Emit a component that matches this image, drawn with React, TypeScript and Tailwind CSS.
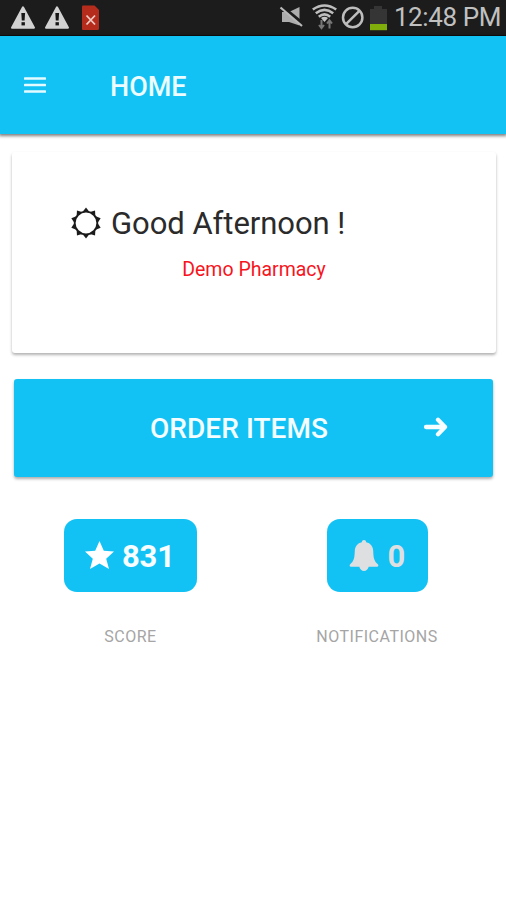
import React from "react";

const sunRays = Array.from({ length: 10 }, (_, i) => i * 36);

function StatusBar() {
  return (
    <div className="flex h-9 items-start bg-[#1c1c1c] border-b border-[#111]">
      <svg width="110" height="35" viewBox="0 0 110 35" className="shrink-0">
        {[0, 34].map((x) => (
          <g key={x} transform={`translate(${x} 0)`}>
            <path d="M23 7.300 34 27.700H12Z" fill="#d2d2d2" stroke="#d2d2d2" strokeWidth="2" strokeLinejoin="round" />
            <path d="M21.300 13h3.800l-.500 7.600h-2.800z" fill="#161616" />
            <rect x="21.500" y="22.200" width="3.400" height="3.200" fill="#161616" />
          </g>
        ))}
        <path d="M83 5.500h11.500l4.500 4.500v18.500a1.500 1.500 0 0 1-1.500 1.500h-14.500a1 1 0 0 1-1-1V6.500a1 1 0 0 1 1-1z" fill="#b52c1c" />
        <path d="m86.500 15.500 8.500 9m0-9-8.500 9" stroke="#eecbc5" strokeWidth="1.800" />
      </svg>
      <div className="flex-1" />
      <svg width="120" height="35" viewBox="270 0 120 35" className="mr-[4px] shrink-0">
        <path d="M282 12h7l10.500-5v18.500l-10.500-3.500h-7z" fill="#adadad" />
        <path d="m281 6 22 18" stroke="#1c1c1c" strokeWidth="3.600" />
        <path d="m280.500 7.500 21.500 18.500" stroke="#bababa" strokeWidth="2.200" />
        <g fill="none" stroke="#bebebe" strokeWidth="2.600">
          <path d="M312.800 9.500Q324.500 1.500 336.200 9.500" />
          <path d="M315.800 13.200Q324.500 6.700 333.200 13.200" />
          <path d="M318.800 16.700Q324.500 12.200 330.200 16.700" />
        </g>
        <path d="M321 18q3.500-2.500 7 0l-3.500 4z" fill="#c5c5c5" />
        <path d="M321.500 20v8m-2.500-3 2.500 3.200 2.500-3.200M329.500 28.500v-8m-2.500 3 2.500-3.200 2.500 3.200" fill="none" stroke="#777" strokeWidth="2" />
        <circle cx="352.700" cy="17.500" r="9.700" fill="none" stroke="#bdbdbd" strokeWidth="2.500" />
        <path d="m346 24.200 13.400-13.400" stroke="#bdbdbd" strokeWidth="2.500" />
        <path d="M370 9h4V6h8v3h5v15h-17z" fill="#353535" />
        <rect x="370" y="24" width="17" height="6.200" fill="#80ae0b" />
      </svg>
      <span className="mr-[5px] mt-[2px] whitespace-nowrap text-[26px] leading-[31px] tracking-[-0.4px] text-[#c0c0c0]">12:48 PM</span>
    </div>
  );
}

function Sun() {
  return (
    <svg width="32" height="32" viewBox="-16 -16 32 32" className="mb-[3px] shrink-0">
      <circle r="11.300" fill="none" stroke="#1b1b1b" strokeWidth="1.800" />
      {sunRays.map((a) => (
        <path key={a} d="M-3.300-11.300 0-15.400 3.300-11.300Z" fill="#1b1b1b" transform={`rotate(${a})`} />
      ))}
    </svg>
  );
}

export default function App() {
  return (
    <div className="flex min-h-[900px] w-[506px] flex-col bg-white font-[Roboto,sans-serif]">
      <StatusBar />
      <header className="flex h-[98px] items-center bg-[#13c2f5] pl-6 shadow-[0_1px_3px_1px_rgba(0,0,0,0.5)]">
        <svg width="22" height="18" viewBox="0 0 22 18" className="shrink-0">
          <path d="M1 2.500h20M1 9h20M1 15.500h20" stroke="#e3faff" strokeWidth="2.700" strokeLinecap="round" />
        </svg>
        <h1 className="ml-16 mt-[3px] text-[27px] font-medium leading-8 text-[#ecfcff]">HOME</h1>
      </header>

      <section className="ml-3 mt-[18px] h-[201px] w-[484px] rounded-[3px] bg-white pt-[54px] shadow-[0_2px_3px_0_rgba(0,0,0,0.3)]">
        <div className="ml-[58px] flex items-center">
          <Sun />
          <span className="ml-[9px] whitespace-nowrap text-[31px] leading-9 tracking-[-0.05px] text-[#2b2b2b]">Good Afternoon !</span>
        </div>
        <p className="mt-[16px] text-center text-[19.500px] leading-6 text-[#f8141c]">Demo Pharmacy</p>
      </section>

      <button className="ml-[14px] mt-[26px] flex h-[98px] w-[479px] items-center rounded-[3px] bg-[#13c2f5] shadow-[0_2px_3px_0_rgba(0,0,0,0.32)]">
        <span className="ml-[136px] mt-[2px] w-[273px] whitespace-nowrap text-left text-[28px] font-medium leading-8 tracking-[0.05px] text-[#f4fdff]">ORDER ITEMS</span>
        <svg width="26" height="20" viewBox="0 0 26 20" className="mb-[2px] shrink-0">
          <path d="M3 10h19M15 2.800 22 10l-7 7.200" fill="none" stroke="#f6feff" strokeWidth="4.300" strokeLinecap="round" strokeLinejoin="round" />
        </svg>
      </button>

      <div className="mt-[42px] flex">
        <div className="ml-16 flex w-[133px] flex-col items-center">
          <div className="flex h-[73px] w-[133px] items-center rounded-[13px] bg-[#13c2f5] pl-[21px]">
            <svg width="29" height="29" viewBox="0 0 29 29" className="shrink-0">
              <path d="m14.500 0 4.300 9.700 10.200.8-7.800 7.200 2.800 10.300-9.500-5.500L5 28l2.800-10.300L0 10.500l10.200-.8z" fill="#fff" />
            </svg>
            <span className="ml-[8px] mt-[2px] text-[31px] font-bold leading-9 tracking-[-0.2px] text-[#f8feff]">831</span>
          </div>
          <span className="mt-[34px] text-[16px] leading-[22px] tracking-[0.5px] text-[#a5a5a5]">SCORE</span>
        </div>
        <div className="ml-[119px] flex w-[122px] flex-col items-center">
          <div className="flex h-[73px] w-[101px] items-center rounded-[13px] bg-[#13c2f5] pl-[22px]">
            <svg width="30" height="32" viewBox="0 0 30 32" className="shrink-0">
              <path d="M15 0c1.300 0 2 .8 2.200 2.300C21.500 3.200 24 6.500 24.200 11c.3 7.500 1 10 4.600 13.300 1 1 .6 2.500-.8 2.500h-8.300C19 29.500 17.300 31 15 31s-4-1.500-4.700-4.200H2c-1.400 0-1.800-1.500-.8-2.500C4.800 21 5.500 18.500 5.800 11 6 6.500 8.500 3.200 12.800 2.300 13 .8 13.700 0 15 0z" fill="#dedfe0" />
            </svg>
            <span className="ml-[9px] mt-[2px] text-[31px] font-bold leading-9 text-[#dedfe0]">0</span>
          </div>
          <span className="mt-[34px] whitespace-nowrap text-[16px] leading-[22px] tracking-[0.500px] text-[#a5a5a5]">NOTIFICATIONS</span>
        </div>
      </div>
    </div>
  );
}
